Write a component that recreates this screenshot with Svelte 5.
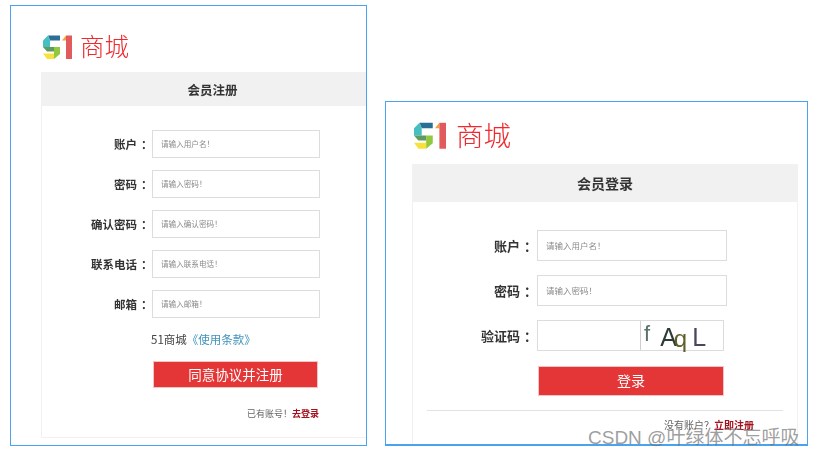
<script>
  const regFields = [
    { label: '账户', hint: '请输入用户名！' },
    { label: '密码', hint: '请输入密码！' },
    { label: '确认密码', hint: '请输入确认密码！' },
    { label: '联系电话', hint: '请输入联系电话！' },
    { label: '邮箱', hint: '请输入邮箱！' }
  ];
  const loginFields = [
    { label: '账户', hint: '请输入用户名！' },
    { label: '密码', hint: '请输入密码！' }
  ];
</script>

{#snippet logo()}
  <div class="logo">
    <svg viewBox="0 0 29 24" aria-hidden="true">
      <path d="M5 0.5H17V5.5H7Z" fill="#2b6f96" />
      <path d="M0 5.5L5 0.5L7 5.5V12H0Z" fill="#45bfc0" />
      <path d="M0 12H11V16.5H4Z" fill="#5f9a63" />
      <path d="M11 12H17V19L11 24Z" fill="#92c83e" />
      <path d="M0 18.5H11V24H4Z" fill="#f6e13d" />
      <path d="M19 5.5L23 0.5V5.5Z" fill="#f5a13a" />
      <rect x="23" y="0.5" width="6" height="23.5" fill="#e35a5c" />
    </svg>
    <span>商城</span>
  </div>
{/snippet}

<div class="page">
  <section class="shot reg">
    {@render logo()}
    <div class="panel">
      <h2>会员注册</h2>
      <form>
        {#each regFields as f}
          <div class="row">
            <label for={'r-' + f.label}>{f.label}<i>：</i></label>
            <input id={'r-' + f.label} placeholder={f.hint} />
          </div>
        {/each}
        <p class="terms">51商城<a href="#t">《使用条款》</a></p>
        <button type="button">同意协议并注册</button>
        <p class="foot">已有账号！<a href="#l">去登录</a></p>
      </form>
    </div>
  </section>

  <section class="shot login">
    {@render logo()}
    <div class="panel">
      <h2>会员登录</h2>
      <form>
        {#each loginFields as f}
          <div class="row">
            <label for={'l-' + f.label}>{f.label}<i>：</i></label>
            <input id={'l-' + f.label} placeholder={f.hint} />
          </div>
        {/each}
        <div class="row">
          <label for="l-code">验证码<i>：</i></label>
          <div class="code">
            <input id="l-code" />
            <div class="captcha">
              <span class="c1">f</span><span class="c2">A</span><span class="c3">q</span><span class="c4">L</span>
            </div>
          </div>
        </div>
        <button type="button">登录</button>
        <hr />
        <p class="foot">没有账户？<a href="#r">立即注册</a></p>
      </form>
    </div>
  </section>

  <div class="watermark">CSDN @叶绿体不忘呼吸</div>
</div>

<style>
  :global(body) {
    margin: 0;
    background: #fff;
  }

  .page {
    position: relative;
    width: 815px;
    height: 456px;
    overflow: hidden;
    display: flex;
    align-items: flex-start;
    padding: 5px 0 0 10px;
    box-sizing: border-box;
    font-family: "Noto Sans CJK SC", "Liberation Sans", sans-serif;
    color: #333;
  }

  .shot {
    box-sizing: border-box;
    border: 1px solid #4aa3f0;
    overflow: hidden;
  }

  .reg {
    width: 357px;
    height: 441px;
    padding: 22px 0 0 30px;
  }

  .login {
    width: 423px;
    height: 345px;
    margin: 96px 0 0 18px;
    border-bottom-width: 2px;
    padding: 11px 0 0 26px;
  }

  .logo,
  .panel {
    filter: blur(0.3px);
  }

  .logo {
    display: flex;
    align-items: center;
  }

  .logo svg {
    display: block;
    flex: none;
  }

  .logo span {
    font-weight: 300;
    color: #ee2a2e;
    line-height: 1;
  }

  .reg .logo {
    height: 44px;
    padding: 0 0 7px 2px;
    box-sizing: border-box;
  }

  .reg .logo svg {
    width: 29px;
    height: 24px;
  }

  .reg .logo span {
    font-size: 24.5px;
    margin-left: 8px;
  }

  .login .logo {
    height: 51px;
    padding: 0 0 7px 2px;
    box-sizing: border-box;
  }

  .login .logo svg {
    width: 32px;
    height: 27px;
  }

  .login .logo span {
    font-size: 27.5px;
    margin-left: 10px;
  }

  .panel {
    border: 1px solid #f1f1f1;
    border-right: 0;
    box-sizing: border-box;
  }

  .reg .panel {
    height: 366px;
  }

  .login .panel {
    width: 386px;
    height: 300px;
    border-right: 1px solid #f1f1f1;
  }

  h2 {
    margin: 0;
    background: #f1f1f1;
    font-weight: 700;
    text-align: center;
    color: #333;
  }

  .reg h2 {
    font-size: 12.5px;
    line-height: 33px;
    padding-left: 17px;
  }

  .login h2 {
    font-size: 14px;
    line-height: 37px;
  }

  form {
    display: flex;
    flex-direction: column;
  }

  .reg form {
    padding-top: 24px;
    gap: 12px;
  }

  .login form {
    padding-top: 28px;
    gap: 14px;
  }

  .row {
    display: flex;
    align-items: center;
  }

  label {
    display: flex;
    justify-content: flex-end;
    font-weight: 700;
    color: #333;
    white-space: nowrap;
  }

  label i {
    font-style: normal;
    text-align: left;
    box-sizing: border-box;
  }

  .reg label {
    width: 110px;
    font-size: 11.5px;
    line-height: 14px;
  }

  .reg label i {
    width: 15px;
    padding-left: 4px;
  }

  .login label {
    width: 124px;
    font-size: 13px;
    line-height: 16px;
  }

  .login label i {
    width: 17px;
    padding-left: 4px;
  }

  input {
    box-sizing: border-box;
    border: 1px solid #dcdcdc;
    background: #fff;
    padding: 0 0 2px 8px;
    margin: 0;
    outline: none;
    font-family: inherit;
    font-size: 7.6px;
  }

  input::placeholder {
    color: #8a8a8a;
    opacity: 1;
  }

  .reg input {
    width: 168px;
    height: 28px;
  }

  .login input {
    width: 190px;
    height: 31px;
    font-size: 8.5px;
  }

  .login .code {
    display: flex;
    width: 187px;
    height: 31px;
    box-sizing: border-box;
    border: 1px solid #dcdcdc;
  }

  .login .code input {
    width: 102px;
    height: 29px;
    border: 0;
  }

  .captcha {
    flex: 1;
    display: flex;
    align-items: flex-end;
    border-left: 1px solid #cfcfcf;
    font-family: "Liberation Sans", sans-serif;
    font-size: 25px;
    line-height: 1;
    padding-left: 3px;
  }

  .c1 {
    color: #55736b;
    font-size: 22px;
    margin-bottom: 5px;
    margin-right: 10px;
  }

  .c2 {
    color: #2d3d36;
  }

  .c3 {
    color: #5f5f2a;
    font-size: 24px;
    margin-left: -3px;
    margin-right: 5px;
    margin-bottom: -1px;
  }

  .c4 {
    color: #4a4860;
  }

  .terms {
    margin: 0;
    font-size: 11.5px;
    line-height: 16px;
    color: #444;
  }

  .reg .terms {
    padding-left: 109px;
    margin-top: 1px;
  }

  .terms a {
    color: #3f93bd;
    text-decoration: none;
  }

  button {
    box-sizing: border-box;
    border: 1px solid #f3c4c4;
    background: #e43636;
    color: #fff;
    font-family: inherit;
    font-size: 13.5px;
    padding: 0 0 2px;
  }

  .reg button {
    width: 165px;
    height: 27px;
    margin: 2px 0 0 111px;
  }

  .login button {
    width: 186px;
    height: 30px;
    margin: 1px 0 0 125px;
    font-size: 14px;
  }

  .foot {
    margin: 0;
    font-size: 9px;
    line-height: 12px;
    text-align: right;
    color: #666;
  }

  .foot a {
    color: #a5101c;
    font-weight: 700;
    text-decoration: none;
  }

  .reg .foot {
    width: 277px;
    margin-top: 8px;
  }

  hr {
    width: 356px;
    height: 1px;
    border: 0;
    background: #e2e2e2;
    margin: 0 0 0 14px;
  }

  .login .foot {
    width: 341px;
    margin-top: -6px;
    font-size: 10px;
  }

  .watermark {
    position: absolute;
    left: 588px;
    top: 427px;
    font-family: "Liberation Sans", "Noto Sans CJK SC", sans-serif;
    font-size: 19px;
    line-height: 22px;
    color: rgba(110, 110, 110, 0.68);
    white-space: nowrap;
  }
</style>
